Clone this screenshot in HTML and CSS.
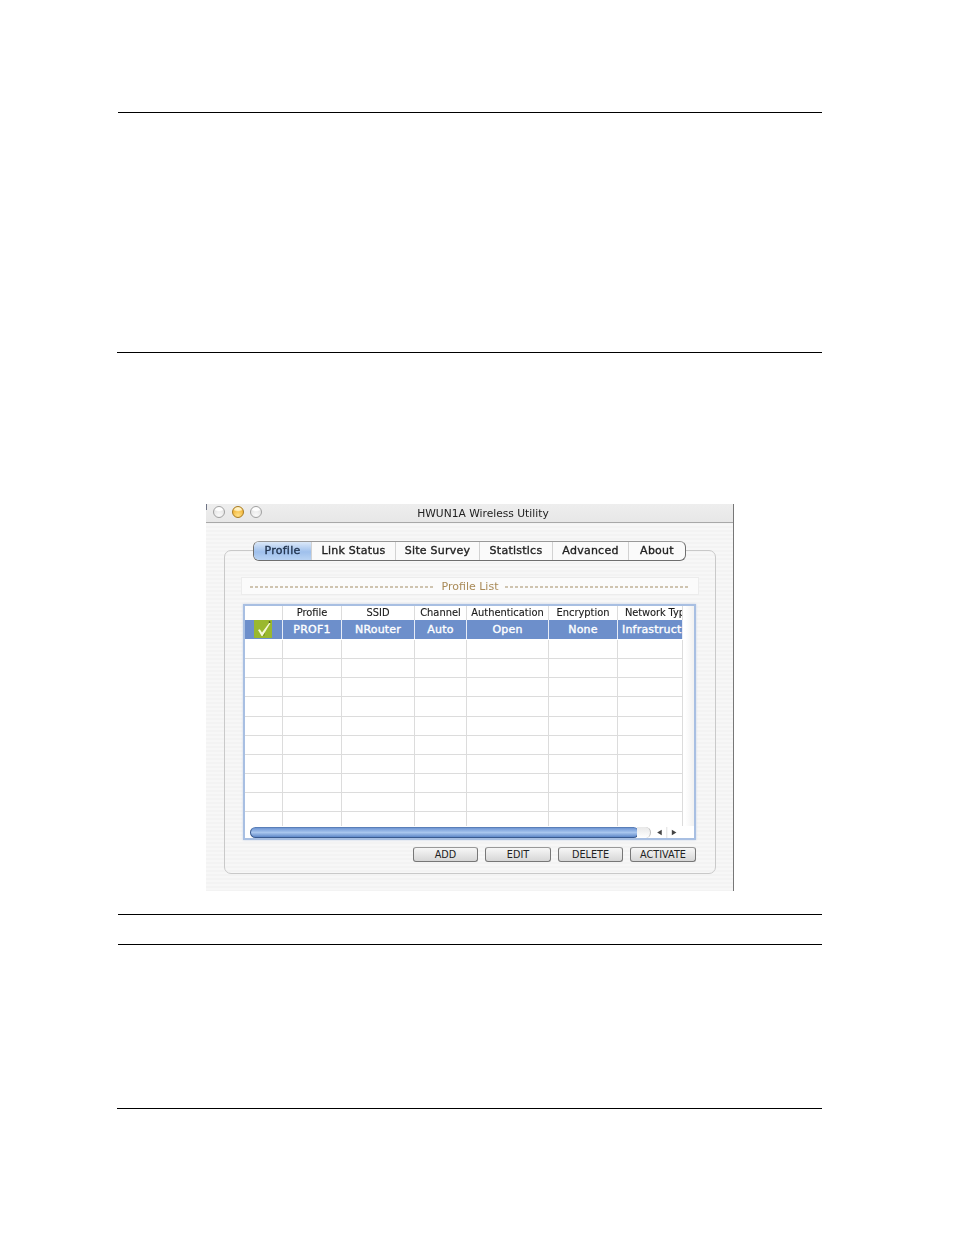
FILE: index.html
```html
<!DOCTYPE html>
<html lang="en">
<head>
<meta charset="utf-8">
<title>HWUN1A Wireless Utility</title>
<link rel="stylesheet" href="styles.css">
</head>
<body>
<div class="rule rule-a"></div>
<div class="rule rule-b rule-wide"></div>
<section class="window">
  <header class="titlebar">
    <div class="lights">
      <span class="light"></span>
      <span class="light light-min"></span>
      <span class="light"></span>
    </div>
    <div class="title">HWUN1A Wireless Utility</div>
  </header>
  <div class="content">
    <div class="panel">
      <nav class="tabs">
        <div class="tab tab-active t1">Profile</div>
        <div class="tab t2">Link Status</div>
        <div class="tab t3">Site Survey</div>
        <div class="tab t4">Statistics</div>
        <div class="tab t5">Advanced</div>
        <div class="tab t6">About</div>
      </nav>
      <div class="listhead">
        <span class="dash"></span>
        <span class="listtitle">Profile List</span>
        <span class="dash"></span>
      </div>
      <div class="tablebox">
        <div class="tablearea">
          <div class="row row-head">
            <div class="cell"></div><div class="cell">Profile</div><div class="cell">SSID</div><div class="cell">Channel</div><div class="cell">Authentication</div><div class="cell">Encryption</div><div class="cell clip">Network Typ</div>
          </div>
          <div class="row row-sel">
            <div class="cell cell-check"><svg class="check" viewBox="0 0 18 18" width="18" height="18"><rect width="18" height="18" fill="#9ab82e"/><path d="M4 10 L5.8 9.2 L8 12.6 L15.5 2.5 L16.3 3.2 L8.7 16 L7.6 16 Z" fill="#f6f8d8"/><path d="M14.5 2 L16 1 L16.5 2.5 L15.5 3 Z" fill="#39441a"/><path d="M8.7 16 L11 12.5 L10.5 15.5 Z" fill="#6f8a20"/></svg></div><div class="cell">PROF1</div><div class="cell">NRouter</div><div class="cell">Auto</div><div class="cell">Open</div><div class="cell">None</div><div class="cell clip">Infrastruct</div>
          </div>
          <div class="row"><div class="cell"></div><div class="cell"></div><div class="cell"></div><div class="cell"></div><div class="cell"></div><div class="cell"></div><div class="cell"></div></div>
          <div class="row"><div class="cell"></div><div class="cell"></div><div class="cell"></div><div class="cell"></div><div class="cell"></div><div class="cell"></div><div class="cell"></div></div>
          <div class="row"><div class="cell"></div><div class="cell"></div><div class="cell"></div><div class="cell"></div><div class="cell"></div><div class="cell"></div><div class="cell"></div></div>
          <div class="row"><div class="cell"></div><div class="cell"></div><div class="cell"></div><div class="cell"></div><div class="cell"></div><div class="cell"></div><div class="cell"></div></div>
          <div class="row"><div class="cell"></div><div class="cell"></div><div class="cell"></div><div class="cell"></div><div class="cell"></div><div class="cell"></div><div class="cell"></div></div>
          <div class="row"><div class="cell"></div><div class="cell"></div><div class="cell"></div><div class="cell"></div><div class="cell"></div><div class="cell"></div><div class="cell"></div></div>
          <div class="row"><div class="cell"></div><div class="cell"></div><div class="cell"></div><div class="cell"></div><div class="cell"></div><div class="cell"></div><div class="cell"></div></div>
          <div class="row"><div class="cell"></div><div class="cell"></div><div class="cell"></div><div class="cell"></div><div class="cell"></div><div class="cell"></div><div class="cell"></div></div>
          <div class="row"><div class="cell"></div><div class="cell"></div><div class="cell"></div><div class="cell"></div><div class="cell"></div><div class="cell"></div><div class="cell"></div></div>
          <div class="row row-last"><div class="cell"></div><div class="cell"></div><div class="cell"></div><div class="cell"></div><div class="cell"></div><div class="cell"></div><div class="cell"></div></div>
        </div>
        <div class="scrollbar">
          <div class="thumb"></div>
          <div class="trackend"></div>
          <svg class="arrows" viewBox="0 0 32 12" width="32" height="12"><path d="M7 3 V9 L2 6 Z" fill="#444"/><path d="M18 3 V9 L23 6 Z" fill="#444"/><path d="M12.5 0 V12" stroke="#ddd"/></svg>
        </div>
      </div>
      <div class="buttons">
        <div class="btn">ADD</div>
        <div class="btn">EDIT</div>
        <div class="btn">DELETE</div>
        <div class="btn">ACTIVATE</div>
      </div>
    </div>
  </div>
</section>
<div class="rule rule-c"></div>
<div class="rule rule-d"></div>
<div class="rule rule-e rule-wide"></div>
</body>
</html>
```
FILE: styles.css
```css
* { box-sizing: border-box; }
html, body { margin: 0; padding: 0; background: #fff; }
body { font-family: "DejaVu Sans", sans-serif; color: #111; }

.rule { height: 1px; background: #000; margin-left: 118px; width: 704px; }
.rule-wide { margin-left: 117px; width: 705px; }
.rule-a { margin-top: 112px; }
.rule-b { margin-top: 239px; }
.rule-c { margin-top: 23px; }
.rule-d { margin-top: 29px; }
.rule-e { margin-top: 163px; }

.window {
  margin: 151px 0 0 206px;
  width: 528px;
  height: 387px;
  background: repeating-linear-gradient(180deg, #f7f7f7 0, #f7f7f7 2px, #f3f3f3 2px, #f3f3f3 4px);
  border-right: 1px solid #777;
  display: flex;
  flex-direction: column;
}

.titlebar {
  height: 19px;
  flex: none;
  display: grid;
  grid-template-columns: 1fr;
  align-items: center;
  position: relative;
  background: linear-gradient(180deg, #eeeeee, #e7e7e7);
  border-bottom: 1px solid #a8a8a8;
}
.titlebar::before {
  content: "";
  position: absolute;
  left: 0;
  top: 0;
  width: 1px;
  height: 6px;
  background: #6f7486;
}
.title {
  text-align: center;
  font-size: 10.7px;
  color: #222;
  padding-left: 27px;
  filter: blur(0.3px);
}
.lights {
  position: absolute;
  left: 7px;
  top: 2px;
  display: flex;
  gap: 6.5px;
  filter: blur(0.3px);
}
.light {
  width: 12px;
  height: 12px;
  border-radius: 50%;
  border: 1px solid #a0a0a0;
  background: radial-gradient(ellipse 60% 30% at 50% 18%, #fff 0, #fff 55%, transparent 100%), radial-gradient(circle at 50% 85%, #fafafa, #e4e4e4 70%, #cfcfcf);
}
.light-min {
  border-color: #a87a20;
  background: radial-gradient(ellipse 60% 30% at 50% 18%, #fff4d0 0, #ffeeb8 55%, transparent 100%), radial-gradient(circle at 50% 85%, #ffe18a, #f3b73a 65%, #c88a1c);
}

.content { flex: 1; padding: 27px 17px 17px 18px; }

.panel {
  position: relative;
  height: 324px;
  border: 1px solid #c9c9c9;
  border-radius: 7px;
  padding: 26px 16px 0 16px;
}

.tabs {
  position: absolute;
  left: 28px;
  top: -10px;
  width: 433px;
  height: 20px;
  display: flex;
  background: #fafafa;
  border: 1px solid #6e6e6e;
  border-top-color: #999;
  border-radius: 6px;
  overflow: hidden;
}
.tab {
  display: flex;
  align-items: center;
  justify-content: center;
  padding-bottom: 2px;
  font-size: 11px;
  letter-spacing: 0.25px;
  -webkit-text-stroke: 0.35px #222;
  color: #222;
  border-right: 1px solid #d2d2d2;
  white-space: nowrap;
  filter: blur(0.25px);
}
.t1 { width: 58px; }
.t2 { width: 84px; }
.t3 { width: 84px; }
.t4 { width: 73px; }
.t5 { width: 76px; }
.t6 { flex: 1; border-right: 0; }
.tab-active {
  background: linear-gradient(180deg, #dbe8f8, #9fc0ec 55%, #b9d3f3);
  color: #21344f;
  -webkit-text-stroke-color: #21344f;
}

.listhead {
  height: 18px;
  background: #fbfbfb;
  border: 1px solid #ececec;
  display: flex;
  align-items: center;
  gap: 7px;
  padding: 1px 8px 0;
}
.dash {
  flex: 1;
  height: 2px;
  background: repeating-linear-gradient(90deg, #cfc4b0 0, #cfc4b0 3px, transparent 3px, transparent 5px);
}
.listtitle { font-size: 11px; color: #a98a57; white-space: nowrap; filter: blur(0.25px); }

.tablebox {
  margin: 9px 0 0 2px;
  width: 453px;
  height: 236px;
  background: #fff;
  border: 2px solid #a8bfe2;
  box-shadow: 0 0 2px #c6d3e8;
  display: flex;
  flex-direction: column;
}
.tablearea {
  flex: none;
  height: 220px;
  overflow: hidden;
  background: linear-gradient(90deg, #fff 440px, #f1f1f1 449px);
}

.row {
  display: grid;
  grid-template-columns: 38px 59px 73px 52px 82px 69px 65px;
  width: 438px;
  height: 19.2px;
  background: #fff;
  border-bottom: 1px solid #dcdcdc;
}
.row-last { height: 14px; border-bottom: 0; }
.row-head { height: 14px; font-size: 9.9px; color: #1a1a1a; border-bottom: 0; -webkit-text-stroke: 0.12px #1a1a1a; }
.row-head .cell { padding-bottom: 1px; filter: blur(0.2px); }
.row-sel {
  height: 19.8px;
  background: #6d8fcb;
  color: #fff;
  font-size: 11px;
  letter-spacing: 0.2px;
  -webkit-text-stroke: 0.35px #fff;
  border-bottom: 1px solid #fff;
}
.cell {
  border-right: 1px solid #dcdcdc;
  display: flex;
  align-items: center;
  justify-content: center;
  white-space: nowrap;
  overflow: hidden;
  min-width: 0;
}
.row-sel .cell { border-right-color: #e6ecf7; }
.cell-check { padding-right: 2px; }
.clip { justify-content: flex-start; padding-left: 4px; }
.row-head .clip { padding-left: 7px; letter-spacing: -0.1px; }
.check { display: block; }

.scrollbar {
  flex: none;
  height: 12px;
  display: flex;
  align-items: flex-start;
  padding: 1px 0 0 5px;
  background: #fff;
}
.thumb {
  width: 389px;
  height: 11px;
  border-radius: 6px;
  border: 1px solid #38598f;
  border-top-color: #5a7fb8;
  background: linear-gradient(180deg, #6f96d4, #a9c6ee 50%, #5f88c8);
}
.trackend {
  width: 14px;
  height: 11px;
  margin-left: -2px;
  border-radius: 0 6px 6px 0;
  border-right: 1px solid #bbb;
  background: linear-gradient(180deg, #e8e8e8, #fff);
}
.arrows { margin-left: 3px; display: block; height: 11px; }

.buttons {
  display: grid;
  grid-template-columns: 65px 66px 65px 66px;
  justify-content: end;
  gap: 7px;
  margin-top: 7px;
  width: 455px;
}
.btn {
  height: 15px;
  display: flex;
  align-items: center;
  justify-content: center;
  padding-bottom: 1px;
  font-size: 9.7px;
  color: #222;
  border: 1px solid #777;
  border-top-color: #999;
  border-radius: 3px;
  background: linear-gradient(180deg, #f7f7f7, #d6d6d6);
}
```
